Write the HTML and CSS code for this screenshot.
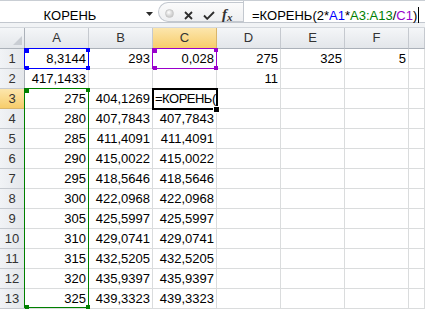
FILE: index.html
```html
<!DOCTYPE html>
<html lang="ru">
<head>
<meta charset="utf-8">
<title>Excel</title>
<link rel="stylesheet" href="styles.css">
</head>
<body>
<div class="app">
  <div class="fbar">
    <div class="namebox">
      <span class="name">КОРЕНЬ</span>
      <svg class="dd" width="7" height="4" viewBox="0 0 7 4"><path d="M0 0H7L3.5 4Z" fill="#2b2b2b"/></svg>
    </div>
    <div class="btns">
      <span class="dot"></span>
      <svg class="ico-x" width="9" height="9" viewBox="0 0 9 9"><path d="M1 1L8 8M8 1L1 8" stroke="#2e2e2e" stroke-width="1.8" fill="none"/></svg>
      <svg class="ico-ok" width="12" height="9" viewBox="0 0 12 9"><path d="M1 4.5L4.2 7.8L11 1" stroke="#2e2e2e" stroke-width="1.9" fill="none"/></svg>
      <span class="fx"><i>f</i><span class="fxx">x</span></span>
    </div>
    <div class="formula">=КОРЕНЬ(2*<span class="c-blue">A1</span>*<span class="c-green">A3:A13</span>/<span class="c-purple">C1</span>)<span class="caret"></span></div>
  </div>
  <div class="strip"></div>
  <div class="sheet">
    <div class="grid">
      <div class="hd corner"><svg width="9" height="9" viewBox="0 0 9 9"><path d="M9 0V9H0Z" fill="#c9cdd3"/></svg></div>
      <div class="hd">A</div><div class="hd">B</div><div class="hd sel">C</div><div class="hd">D</div><div class="hd">E</div><div class="hd">F</div><div class="hd"></div>

      <div class="rh">1</div><div class="c">8,3144</div><div class="c">293</div><div class="c">0,028</div><div class="c">275</div><div class="c">325</div><div class="c">5</div><div class="c"></div>
      <div class="rh">2</div><div class="c">417,1433</div><div class="c"></div><div class="c"></div><div class="c">11</div><div class="c"></div><div class="c"></div><div class="c"></div>
      <div class="rh sel">3</div><div class="c">275</div><div class="c">404,1269</div><div class="c edit">=КОРЕНЬ(<span class="caret2"></span></div><div class="c"></div><div class="c"></div><div class="c"></div><div class="c"></div>
      <div class="rh">4</div><div class="c">280</div><div class="c">407,7843</div><div class="c">407,7843</div><div class="c"></div><div class="c"></div><div class="c"></div><div class="c"></div>
      <div class="rh">5</div><div class="c">285</div><div class="c">411,4091</div><div class="c">411,4091</div><div class="c"></div><div class="c"></div><div class="c"></div><div class="c"></div>
      <div class="rh">6</div><div class="c">290</div><div class="c">415,0022</div><div class="c">415,0022</div><div class="c"></div><div class="c"></div><div class="c"></div><div class="c"></div>
      <div class="rh">7</div><div class="c">295</div><div class="c">418,5646</div><div class="c">418,5646</div><div class="c"></div><div class="c"></div><div class="c"></div><div class="c"></div>
      <div class="rh">8</div><div class="c">300</div><div class="c">422,0968</div><div class="c">422,0968</div><div class="c"></div><div class="c"></div><div class="c"></div><div class="c"></div>
      <div class="rh">9</div><div class="c">305</div><div class="c">425,5997</div><div class="c">425,5997</div><div class="c"></div><div class="c"></div><div class="c"></div><div class="c"></div>
      <div class="rh">10</div><div class="c">310</div><div class="c">429,0741</div><div class="c">429,0741</div><div class="c"></div><div class="c"></div><div class="c"></div><div class="c"></div>
      <div class="rh">11</div><div class="c">315</div><div class="c">432,5205</div><div class="c">432,5205</div><div class="c"></div><div class="c"></div><div class="c"></div><div class="c"></div>
      <div class="rh">12</div><div class="c">320</div><div class="c">435,9397</div><div class="c">435,9397</div><div class="c"></div><div class="c"></div><div class="c"></div><div class="c"></div>
      <div class="rh">13</div><div class="c">325</div><div class="c">439,3323</div><div class="c">439,3323</div><div class="c"></div><div class="c"></div><div class="c"></div><div class="c"></div>
    </div>

    <div class="range r-blue"><span class="h tl"></span><span class="h tr"></span><span class="h bl"></span><span class="h br"></span></div>
    <div class="range r-purple"><span class="h tl"></span><span class="h tr"></span><span class="h bl"></span><span class="h br"></span></div>
    <div class="range r-green"><span class="h tl"></span><span class="h tr"></span><span class="h bl"></span><span class="h br"></span></div>
    <div class="active"></div>
    <div class="fill"></div>
  </div>
</div>
</body>
</html>
```

FILE: styles.css
```css
* { box-sizing: border-box; }

body {
  margin: 0;
  background: #ffffff;
  font-family: "Liberation Sans", Arial, sans-serif;
  font-size: 13px;
  color: #000000;
  overflow: hidden;
}

.app {
  width: 425px;
  height: 309px;
  overflow: hidden;
  display: flex;
  flex-direction: column;
}

/* formula bar */
.fbar {
  display: flex;
  height: 23px;
  flex: none;
  border-top: 1px solid #c9ced4;
  border-bottom: 1px solid #c2c7ce;
  background: #ffffff;
}

.namebox {
  width: 158px;
  display: flex;
  align-items: flex-start;
}

.name {
  width: 140px;
  text-align: center;
  padding-top: 7px;
  line-height: 15px;
}

.dd {
  margin-left: 6px;
  margin-top: 11px;
}

.btns {
  width: 85px;
  display: flex;
  align-items: flex-start;
  border: 1px solid #c3c8cf;
  border-right: none;
  border-radius: 11px 0 0 11px;
  margin-top: 1px;
  background: linear-gradient(#fbfbfb, #eeeff1);
}

.dot {
  width: 9px;
  height: 9px;
  border-radius: 50%;
  margin: 6px 0 0 6px;
  background: radial-gradient(circle at 40% 35%, #ffffff 0, #dcdcdc 45%, #b9b9b9 100%);
  border: 1px solid #c8c8c8;
}

.ico-x {
  margin: 8px 0 0 10px;
}

.ico-ok {
  margin: 8px 0 0 10px;
}

.fx {
  margin: 3px 0 0 7px;
  font-family: "Liberation Serif", "Times New Roman", serif;
  font-size: 15px;
  line-height: 16px;
  color: #333333;
}

.fx i {
  font-style: italic;
  font-weight: bold;
}

.fxx {
  font-size: 11px;
  font-style: italic;
  font-weight: bold;
  position: relative;
  top: 2px;
}

.formula {
  flex: 1;
  border-left: 1px solid #c3c8cf;
  padding-left: 8px;
  padding-top: 6px;
  line-height: 15px;
  white-space: nowrap;
}

.c-blue { color: #0000ff; }
.c-green { color: #008000; }
.c-purple { color: #9900cc; }

.caret {
  display: inline-block;
  width: 1px;
  height: 17px;
  background: #000000;
  vertical-align: -4px;
  margin-left: 1px;
}

.strip {
  height: 5px;
  flex: none;
  background: #f1f3f5;
  border-bottom: 1px solid #d3d7dc;
}

/* sheet */
.sheet {
  position: relative;
  flex: 1;
}

.grid {
  display: grid;
  grid-template-columns: 25px repeat(6, 64px) 16px;
  grid-template-rows: 21px repeat(13, 20px);
}

.hd {
  background: linear-gradient(#f4f6f8, #e3e6ea);
  border-right: 1px solid #c5c9cf;
  border-bottom: 1px solid #abb1b9;
  text-align: center;
  line-height: 20px;
  color: #333333;
}

.hd.sel {
  background: linear-gradient(#fce6ad, #f7cd6b);
  border-bottom-color: #e0a640;
  border-right-color: #d9b56a;
}

.corner {
  display: flex;
  align-items: flex-end;
  justify-content: flex-end;
  padding: 0 2px 3px 0;
  border-right-color: #abb1b9;
}

.rh {
  background: linear-gradient(90deg, #f1f3f6, #e4e7eb);
  border-right: 1px solid #abb1b9;
  border-bottom: 1px solid #c5c9cf;
  text-align: center;
  line-height: 19px;
  color: #333333;
}

.rh.sel {
  background: linear-gradient(#fce6ad, #f7cd6b);
  border-right-color: #e0a640;
  border-bottom-color: #d9b56a;
}

.c {
  border-right: 1px solid #dadcdd;
  border-bottom: 1px solid #dadcdd;
  text-align: right;
  padding-right: 2px;
  line-height: 19px;
  white-space: nowrap;
  overflow: visible;
}

.c.edit {
  text-align: left;
  padding-left: 2px;
  letter-spacing: -0.5px;
  position: relative;
  z-index: 1;
}

.caret2 {
  display: inline-block;
  width: 1px;
  height: 15px;
  background: #000000;
  vertical-align: -3px;
}

/* range highlights (drawn over the grid) */
.range {
  position: absolute;
  border: 1px solid;
  z-index: 2;
}

.r-blue {
  left: 24px;
  top: 20px;
  width: 65px;
  height: 21px;
  border-color: #0000ff;
  color: #0000ff;
}

.r-purple {
  left: 152px;
  top: 20px;
  width: 65px;
  height: 21px;
  border-color: #9900cc;
  color: #9900cc;
}

.r-green {
  left: 24px;
  top: 60px;
  width: 65px;
  height: 220px;
  border-color: #008000;
  color: #008000;
}

.h {
  position: absolute;
  width: 4px;
  height: 4px;
  background: currentColor;
}

.h.tl { left: 0; top: 0; }
.h.tr { right: -2px; top: -1px; }
.h.bl { left: 0; bottom: -2px; }
.h.br { right: -2px; bottom: -2px; }

.active {
  position: absolute;
  left: 152px;
  top: 60px;
  width: 66px;
  height: 22px;
  border: 2px solid #000000;
  z-index: 3;
}

.fill {
  position: absolute;
  left: 213px;
  top: 78px;
  width: 7px;
  height: 7px;
  background: #000000;
  border: 1px solid #ffffff;
  z-index: 4;
}
```
